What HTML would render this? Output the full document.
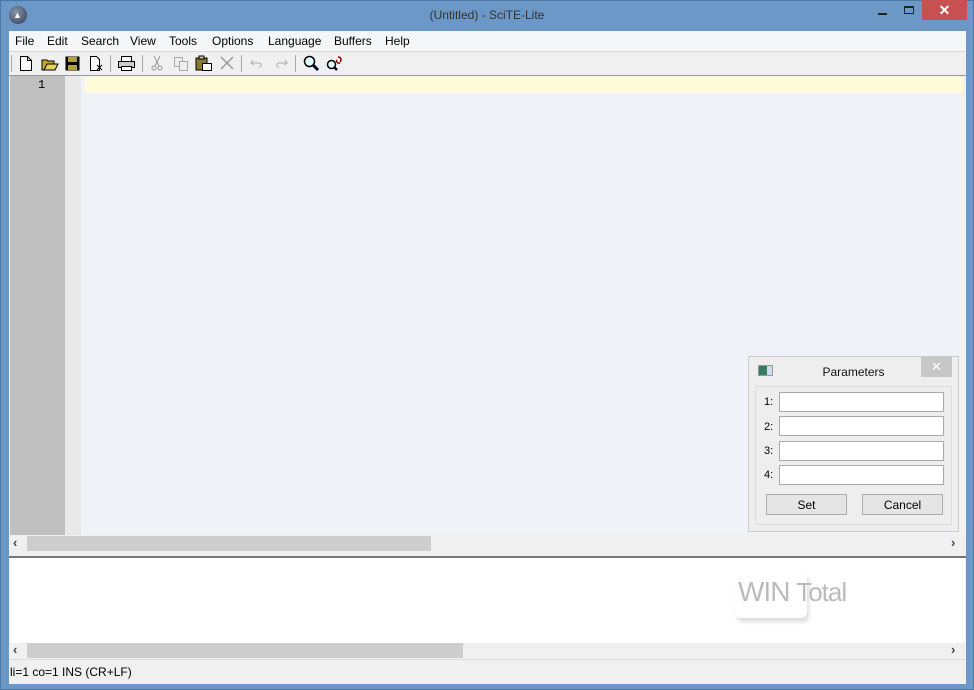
<!DOCTYPE html>
<html><head><style>
*{margin:0;padding:0;box-sizing:border-box}
body{width:974px;height:690px;background:#6b98c6;font-family:"Liberation Sans",sans-serif;font-size:12px;position:relative;overflow:hidden}
.a{position:absolute}
.m{position:absolute;top:34px;font-size:12px;color:#000}
.tb svg{position:absolute}
</style></head><body>
<div class="a" style="left:0;top:0;width:974px;height:690px;border:1px solid #4d77a3;"></div>
<div class="a" style="left:9px;top:6px;width:18px;height:18px;border-radius:50%;background:radial-gradient(circle at 40% 35%,#8a96a8,#2d3a52)"></div>
<div class="a" style="left:13px;top:10px;color:#fff;font-size:9px;font-weight:bold">▲</div>
<div class="a" style="left:0;width:974px;top:8px;text-align:center;color:#333;font-size:12px">(Untitled) - SciTE-Lite</div>
<div class="a" style="left:878px;top:13px;width:9px;height:2px;background:#222"></div>
<div class="a" style="left:904px;top:6px;width:10px;height:8px;border:1px solid #222;border-top-width:2px"></div>
<div class="a" style="left:922px;top:0;width:45px;height:20px;background:#c75050;color:#fff;text-align:center;font-size:14px;line-height:20px;font-weight:bold">✕</div>
<div class="a" style="left:9px;top:31px;width:957px;height:653px;background:#f0f0f0"></div>
<div class="a" style="left:9px;top:31px;width:957px;height:20px;background:#f5f6f7"></div>
<span class="m" style="left:15px">File</span><span class="m" style="left:47px">Edit</span><span class="m" style="left:81px">Search</span><span class="m" style="left:130px">View</span><span class="m" style="left:169px">Tools</span><span class="m" style="left:212px">Options</span><span class="m" style="left:268px">Language</span><span class="m" style="left:334px">Buffers</span><span class="m" style="left:385px">Help</span>
<div class="a" style="left:9px;top:51px;width:957px;height:1px;background:#d8d8d8"></div>
<div class="a tb" style="left:9px;top:52px;width:957px;height:23px">
<div class="a" style="left:2px;top:3px;width:1px;height:17px;background:#aaa"></div>
<svg style="left:10px;top:4px" width="14" height="15"><path d="M1.5 .5h7l4 4v10h-11z M8.5 .5v4h4" fill="#fff" stroke="#000"/></svg>
<svg style="left:32px;top:4px" width="18" height="15"><path d="M1 4h5l1 1h6v9H1z" fill="#c8a820" stroke="#000"/><path d="M3 14l3-6h11l-3 6z" fill="#e8d060" stroke="#000"/></svg>
<svg style="left:56px;top:4px" width="15" height="15"><rect x=".5" y=".5" width="14" height="14" fill="#000"/><rect x="3" y="1" width="9" height="5" fill="#b0a040"/><rect x="3" y="9" width="9" height="5" fill="#b0a040"/></svg>
<svg style="left:80px;top:4px" width="15" height="15"><path d="M1.5 .5h6l3 3v11h-9z" fill="#fff" stroke="#000"/><path d="M8 9l5 5M13 9l-5 5" stroke="#000"/></svg>
<div class="a" style="left:101px;top:3px;width:1px;height:17px;background:#aaa"></div>
<svg style="left:109px;top:4px" width="17" height="15"><rect x="3.5" y=".5" width="10" height="5" fill="#fff" stroke="#000"/><rect x=".5" y="5.5" width="16" height="6" fill="#ccc" stroke="#000"/><rect x="3.5" y="10.5" width="10" height="4" fill="#fff" stroke="#000"/></svg>
<div class="a" style="left:133px;top:3px;width:1px;height:17px;background:#aaa"></div>
<svg style="left:142px;top:4px" width="12" height="15"><path d="M3 0l5 10M9 0L4 10" stroke="#999"/><circle cx="3" cy="12" r="2" fill="none" stroke="#999"/><circle cx="9" cy="12" r="2" fill="none" stroke="#999"/></svg>
<svg style="left:164px;top:4px" width="16" height="15"><rect x="1.5" y="1.5" width="8" height="9" fill="#eee" stroke="#aaa"/><rect x="6.5" y="5.5" width="8" height="9" fill="#eee" stroke="#aaa"/></svg>
<svg style="left:186px;top:3px" width="17" height="16"><rect x="1" y="3" width="11" height="12" fill="#8a7a30" stroke="#000"/><rect x="4" y="1" width="5" height="3" fill="#ccc" stroke="#000"/><rect x="7.5" y="8.5" width="9" height="7" fill="#fff" stroke="#000"/></svg>
<svg style="left:211px;top:4px" width="14" height="14"><path d="M1 1l12 12M13 1L1 13" stroke="#999" stroke-width="1.5"/></svg>
<div class="a" style="left:232px;top:3px;width:1px;height:17px;background:#aaa"></div>
<svg style="left:241px;top:6px" width="14" height="10"><path d="M3 2L1 5l3 2M1 5h8c3 0 3 4 0 4" fill="none" stroke="#aaa"/></svg>
<svg style="left:265px;top:6px" width="14" height="10"><path d="M11 2l2 3-3 2M13 5H5c-3 0-3 4 0 4" fill="none" stroke="#aaa"/></svg>
<div class="a" style="left:286px;top:3px;width:1px;height:17px;background:#aaa"></div>
<svg style="left:294px;top:3px" width="17" height="17"><circle cx="6.5" cy="6.5" r="5" fill="#dff" stroke="#000" stroke-width="1.5"/><path d="M10 10l5 5" stroke="#003" stroke-width="3"/></svg>
<svg style="left:317px;top:3px" width="18" height="17"><circle cx="5.5" cy="9.5" r="4" fill="#dff" stroke="#000" stroke-width="1.5"/><path d="M8 12l3 3" stroke="#003" stroke-width="2.5"/><path d="M12 2c3 0 4 3 2 5M14 8c-3 1-4-2-3-3" fill="none" stroke="#900" stroke-width="1.5"/></svg>
</div>
<div class="a" style="left:9px;top:75px;width:957px;height:1px;background:#999"></div>
<div class="a" style="left:10px;top:76px;width:955px;height:459px;background:#eff2f7"></div>
<div class="a" style="left:10px;top:76px;width:55px;height:459px;background:#c0c0c0"></div>
<div class="a" style="left:65px;top:76px;width:16px;height:459px;background:#e9e9e9"></div>
<div class="a" style="left:85px;top:77px;width:878px;height:16px;background:#fffbd8"></div>
<div class="a" style="left:38px;top:78px;font-family:'Liberation Mono',monospace;font-size:12px">1</div>
<div class="a" style="left:10px;top:535px;width:955px;height:17px;background:#f0f0f0"></div>
<div class="a" style="left:27px;top:536px;width:404px;height:15px;background:#cdcdcd"></div>
<div class="a" style="left:13px;top:535px;font-size:13px;font-weight:bold;color:#444">‹</div>
<div class="a" style="left:951px;top:535px;font-size:13px;font-weight:bold;color:#444">›</div>
<div class="a" style="left:9px;top:556px;width:957px;height:2px;background:#777"></div>
<div class="a" style="left:10px;top:558px;width:955px;height:85px;background:#fff"></div>
<div class="a" style="left:735px;top:572px;width:72px;height:46px;border-radius:6px;box-shadow:2px 4px 4px #ddd"></div>
<div class="a" style="left:738px;top:576px;font-family:'Liberation Sans',sans-serif;font-size:28px;color:#bbb;letter-spacing:-1px">WIN <span style="font-size:26px">Total</span></div>
<div class="a" style="left:10px;top:643px;width:955px;height:16px;background:#f0f0f0"></div>
<div class="a" style="left:27px;top:643px;width:436px;height:15px;background:#cdcdcd"></div>
<div class="a" style="left:13px;top:642px;font-size:13px;font-weight:bold;color:#444">‹</div>
<div class="a" style="left:951px;top:642px;font-size:13px;font-weight:bold;color:#444">›</div>
<div class="a" style="left:9px;top:659px;width:957px;height:1px;background:#ddd"></div>
<div class="a" style="left:10px;top:665px;font-size:12px">li=1 co=1 INS (CR+LF)</div>
<div class="a" style="left:748px;top:356px;width:211px;height:176px;background:#eee;border:1px solid #ccc"></div>
<div class="a" style="left:758px;top:365px;width:15px;height:11px;background:linear-gradient(90deg,#3a7a60 60%,#cde 60%);border:1px solid #999"></div>
<div class="a" style="left:748px;top:365px;width:211px;text-align:center;font-size:12px;color:#111">Parameters</div>
<div class="a" style="left:921px;top:357px;width:31px;height:20px;background:#c7c7c7;color:#fff;text-align:center;line-height:20px;font-size:13px">✕</div>
<div class="a" style="left:755px;top:386px;width:197px;height:139px;border:1px solid #ddd"></div>
<div class="a" style="left:764px;top:396px;font-size:11px">1:</div>
<div class="a" style="left:764px;top:421px;font-size:11px">2:</div>
<div class="a" style="left:764px;top:445px;font-size:11px">3:</div>
<div class="a" style="left:764px;top:469px;font-size:11px">4:</div>
<div class="a" style="left:779px;top:392px;width:165px;height:20px;background:#fff;border:1px solid #aaa"></div>
<div class="a" style="left:779px;top:416px;width:165px;height:20px;background:#fff;border:1px solid #aaa"></div>
<div class="a" style="left:779px;top:441px;width:165px;height:20px;background:#fff;border:1px solid #aaa"></div>
<div class="a" style="left:779px;top:465px;width:165px;height:20px;background:#fff;border:1px solid #aaa"></div>
<div class="a" style="left:766px;top:494px;width:81px;height:21px;background:#e5e5e5;border:1px solid #aaa;text-align:center;line-height:20px">Set</div>
<div class="a" style="left:862px;top:494px;width:81px;height:21px;background:#e5e5e5;border:1px solid #aaa;text-align:center;line-height:20px">Cancel</div>
</body></html>
